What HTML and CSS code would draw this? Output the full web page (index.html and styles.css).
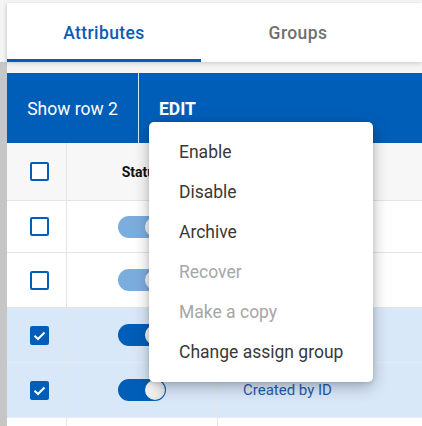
FILE: index.html
```html
<!DOCTYPE html>
<html>
<head>
<meta charset="utf-8">
<link rel="stylesheet" href="styles.css">
</head>
<body>
<div class="tabs">
  <div class="tab active">Attributes</div>
  <div class="tab">Groups</div>
</div>
<div class="main">
  <div class="gutter"></div>
  <div class="content">
    <div class="actionbar">
      <div class="show">Show row 2</div>
      <div class="edit">EDIT</div>
    </div>
    <div class="table">
      <div class="row head">
        <div class="c1"><span class="cb"></span></div>
        <div class="c2"><span class="status">Status</span></div>
        <div class="c3"></div>
      </div>
      <div class="row r1">
        <div class="c1"><span class="cb"></span></div>
        <div class="c2"><span class="toggle dim"><span class="knob"></span></span></div>
        <div class="c3"></div>
      </div>
      <div class="row r2">
        <div class="c1"><span class="cb"></span></div>
        <div class="c2"><span class="toggle dim"><span class="knob"></span></span></div>
        <div class="c3"></div>
      </div>
      <div class="row sel">
        <div class="c1"><span class="cb on"><svg viewBox="0 0 19 19" width="19" height="19"><path d="M4.5 9.8 L8 13 L14.5 6.5" fill="none" stroke="#fff" stroke-width="2"/></svg></span></div>
        <div class="c2"><span class="toggle"><span class="knob"></span></span></div>
        <div class="c3"></div>
      </div>
      <div class="row sel">
        <div class="c1"><span class="cb on"><svg viewBox="0 0 19 19" width="19" height="19"><path d="M4.5 9.8 L8 13 L14.5 6.5" fill="none" stroke="#fff" stroke-width="2"/></svg></span></div>
        <div class="c2"><span class="toggle"><span class="knob"></span></span></div>
        <div class="c3"><span class="link">Created by ID</span></div>
      </div>
      <div class="row tail">
        <div class="c1"></div>
        <div class="c2"></div>
        <div class="c3"></div>
      </div>
    </div>
  </div>
</div>
<div class="menu">
  <div class="item">Enable</div>
  <div class="item">Disable</div>
  <div class="item">Archive</div>
  <div class="item disabled">Recover</div>
  <div class="item disabled">Make a copy</div>
  <div class="item">Change assign group</div>
</div>
</body>
</html>
```
FILE: styles.css
```css
html, body {
  margin: 0;
  padding: 0;
}
body {
  width: 422px;
  height: 426px;
  overflow: hidden;
  background: #f4f4f4;
  font-family: Roboto, "Liberation Sans", sans-serif;
  padding-top: 3px;
  box-sizing: border-box;
  position: relative;
}
.tabs {
  margin-left: 7px;
  height: 59px;
  background: #fff;
  display: flex;
  box-shadow: 0 2px 4px rgba(0,0,0,0.12), -2px 0 3px rgba(0,0,0,0.06);
  position: relative;
  z-index: 1;
}
.tab {
  width: 194px;
  box-sizing: border-box;
  display: flex;
  align-items: center;
  justify-content: center;
  font-size: 17.5px;
  font-weight: 500;
  color: #6f6f6f;
  height: 59px;
  letter-spacing: 0.4px;
}
.tab.active {
  color: #0a5cb3;
  border-bottom: 3px solid #005eb8;
  padding-top: 3px;
}
.main {
  display: flex;
  height: 364px;
}
.gutter {
  width: 7px;
  background: #c6c6c6;
  flex: none;
}
.content {
  flex: 1;
  padding-top: 11px;
  background: #f4f4f4;
}
.actionbar {
  height: 70px;
  background: #005eb8;
  display: flex;
  color: #fff;
  font-size: 17.5px;
}
.show {
  width: 131px;
  border-right: 1px solid rgba(255,255,255,0.85);
  display: flex;
  align-items: center;
  justify-content: center;
  padding-top: 1px;
}
.edit {
  font-weight: 700;
  padding-left: 20px;
  display: flex;
  align-items: center;
  padding-top: 1px;
}
.table {
  background: #fff;
}
.row {
  display: flex;
  border-bottom: 1px solid #e4e4e4;
  height: 54px;
}
.row.head {
  background: #f7f7f7;
  height: 57px;
}
.row.r1 { height: 51px; }
.row.sel { background: #d9e8f9; border-bottom-color: #e6ecf2; }
.row.tail { border-bottom: none; height: 10px; }
.c1 {
  width: 60px;
  border-right: 1px solid #e4e4e4;
  display: flex;
  align-items: center;
  padding-left: 23px;
  box-sizing: border-box;
  flex: none;
}
.c2 {
  width: 150px;
  border-right: 1px solid #e4e4e4;
  display: flex;
  align-items: center;
  justify-content: center;
  flex: none;
}
.c3 {
  flex: 1;
  display: flex;
  align-items: center;
  padding-left: 25px;
}
.cb {
  width: 19px;
  height: 19px;
  box-sizing: border-box;
  border: 2px solid #005eb8;
  border-radius: 2px;
  background: #fff;
  display: block;
  position: relative;
}
.cb.on {
  background: #005eb8;
}
.cb.on svg {
  position: absolute;
  left: -2px;
  top: -2px;
}
.status {
  font-size: 14px;
  font-weight: 700;
  color: #111;
}
.toggle {
  width: 48px;
  height: 22px;
  border-radius: 11px;
  background: #005eb8;
  display: flex;
  justify-content: flex-end;
  align-items: center;
  padding: 0 1px;
  box-sizing: border-box;
}
.toggle.dim {
  background: #7caddf;
}
.knob {
  width: 20px;
  height: 20px;
  border-radius: 50%;
  background: radial-gradient(circle at 35% 35%, #ffffff 0%, #f4f4f4 45%, #d6d6d6 100%);
}
.link {
  font-size: 15px;
  color: #1f5ea8;
  padding-bottom: 1px;
}
.menu {
  position: absolute;
  left: 149px;
  top: 122px;
  width: 224px;
  padding: 10px 0;
  background: #fff;
  border-radius: 5px;
  box-shadow: 0 5px 16px rgba(0,0,0,0.28), 0 1px 4px rgba(0,0,0,0.12);
  z-index: 5;
}
.item {
  height: 40px;
  display: flex;
  align-items: center;
  padding-left: 30px;
  font-size: 17.5px;
  color: #383838;
}
.item.disabled {
  color: #a6a6a6;
}
```
